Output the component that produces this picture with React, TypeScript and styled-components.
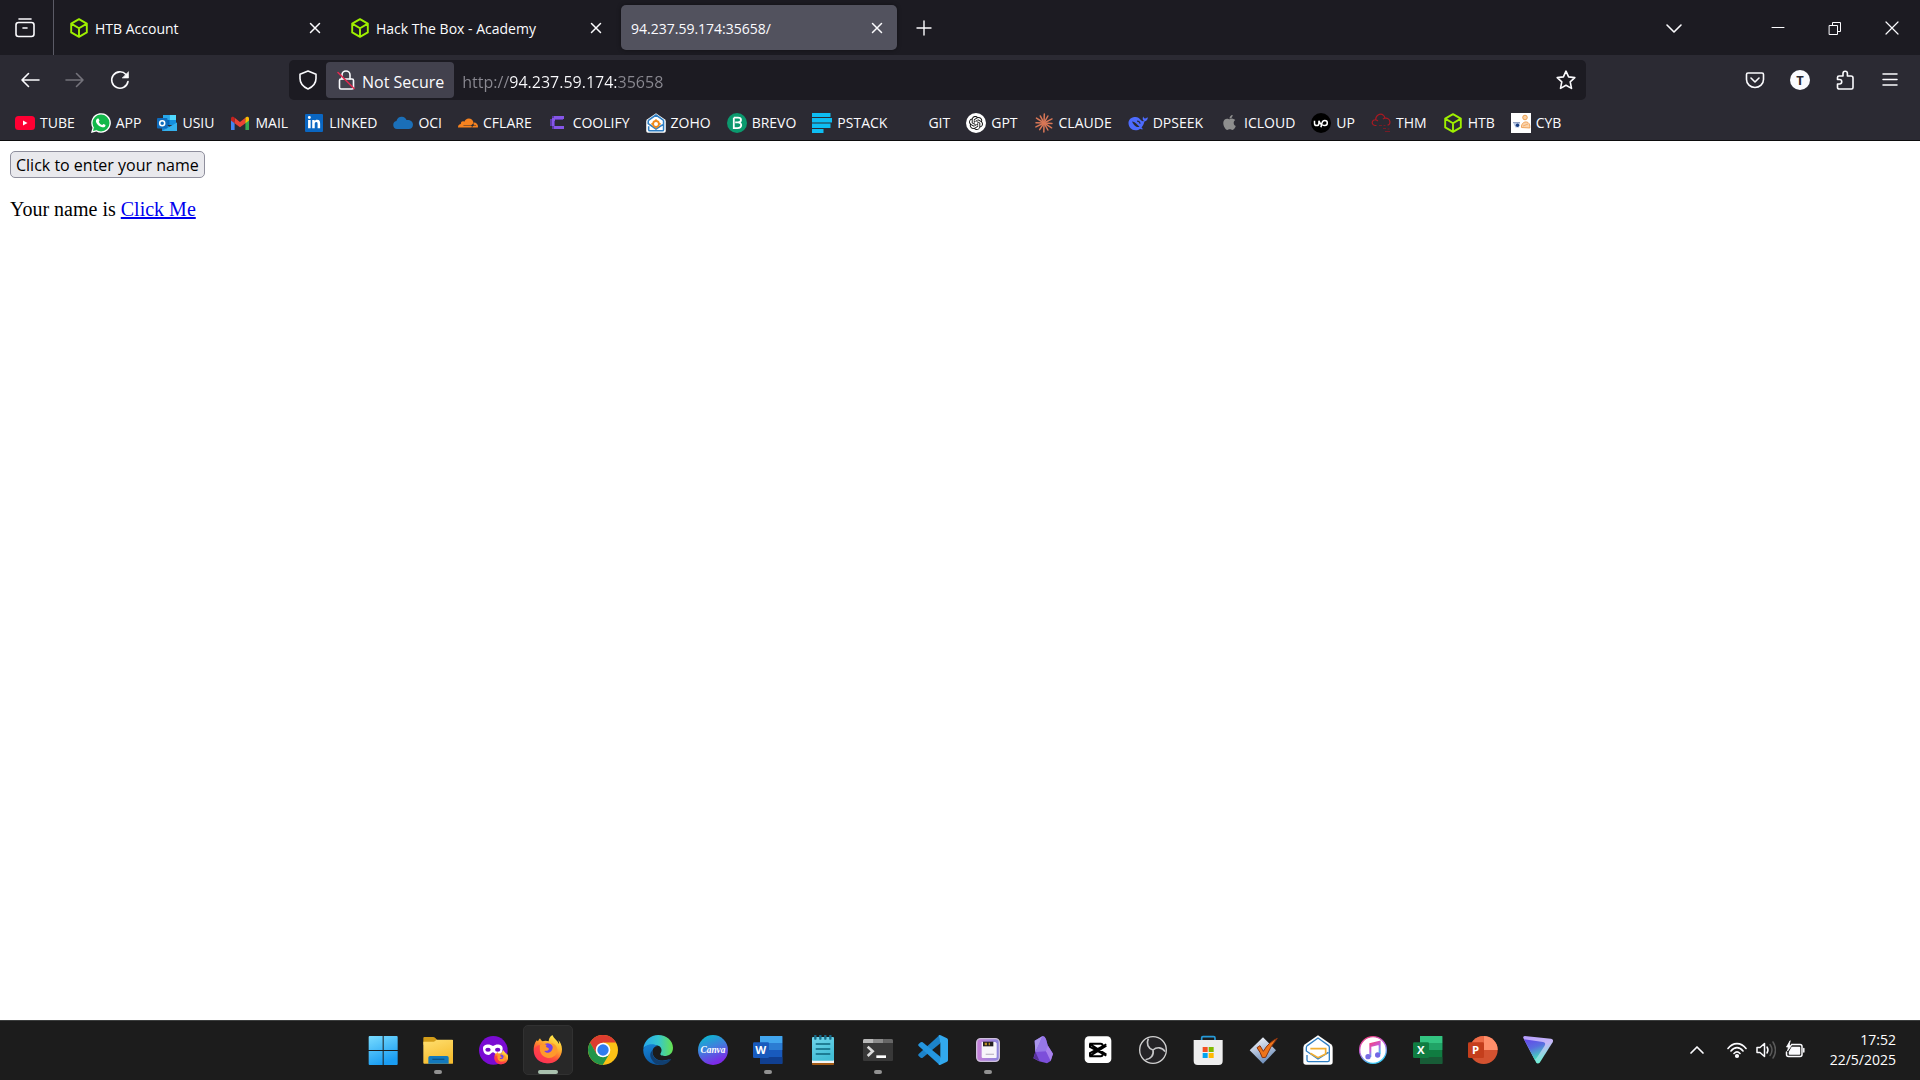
import React from "react";
import styled, { createGlobalStyle } from "styled-components";
import { SiOpenai, SiCloudflare } from "react-icons/si";
import { FaApple, FaLinkedinIn } from "react-icons/fa";

const ui = `"Open Sans", "Noto Sans", sans-serif`;

const GlobalStyle = createGlobalStyle`
  *, *::before, *::after { box-sizing: border-box; }
  body { margin: 0; background: #ffffff; font-family: ${ui}; }
  button, input { font: inherit; }
`;

const Window = styled.div`
  display: flex;
  flex-direction: column;
  min-height: 100vh;
`;

const TabStrip = styled.header`
  display: flex;
  align-items: center;
  height: 55px;
  background: #1c1b22;
  color: #fbfbfe;
  font-size: 14px;
`;

const IconButton = styled.button<{ $w?: number; $h?: number; $dim?: boolean }>`
  display: flex;
  flex: none;
  align-items: center;
  justify-content: center;
  width: ${(p) => p.$w ?? 40}px;
  height: ${(p) => p.$h ?? 40}px;
  padding: 0;
  border: 0;
  background: transparent;
  color: ${(p) => (p.$dim ? "#74737b" : "#fbfbfe")};
`;

const ViewSlot = styled.div`
  display: flex;
  align-items: center;
  justify-content: center;
  width: 54px;
  height: 55px;
  padding-right: 13px;
  padding-left: 10px;
  border-right: 1px solid #5b5b66;
`;

const Tabs = styled.div`
  display: flex;
  gap: 5px;
  min-width: 0;
  margin-left: 5px;
`;

const Tab = styled.div<{ $active?: boolean }>`
  display: flex;
  flex: 0 1 276px;
  align-items: center;
  gap: 6px;
  width: 276px;
  height: 45px;
  padding: 0 10px;
  border-radius: 5px;
  background: ${(p) => (p.$active ? "#52525e" : "transparent")};
  box-shadow: ${(p) => (p.$active ? "0 0 4px rgba(0, 0, 0, 0.4)" : "none")};
`;

const TabTitle = styled.span`
  flex: 1;
  overflow: hidden;
  padding-top: 2px;
  line-height: 20px;
  white-space: nowrap;
`;

const Spacer = styled.div`
  flex: 1;
`;

const WindowControls = styled.div`
  display: flex;
  margin-left: 55px;
`;

const NavBar = styled.nav`
  display: flex;
  align-items: center;
  height: 50px;
  padding: 0 10px;
  background: #2b2a33;
`;

const NavGroup = styled.div`
  display: flex;
  gap: 5px;
`;

const FlexSpace = styled.div`
  flex: 0 1 149px;
`;

const UrlBar = styled.div`
  display: flex;
  flex: 1;
  align-items: center;
  height: 40px;
  border-radius: 5px;
  background: #1c1b22;
  color: #fbfbfe;
  font-size: 16px;
`;

const Identity = styled.button`
  display: flex;
  align-items: center;
  gap: 6px;
  height: 36px;
  padding: 0 10px;
  border: 0;
  border-radius: 4px;
  background: #42414d;
  color: #fbfbfe;
  line-height: 20px;
  white-space: nowrap;
`;

const IdentityLabel = styled.span`
  padding-top: 3px;
`;

const UrlInput = styled.input`
  flex: 1;
  min-width: 0;
  height: 36px;
  margin-left: 8px;
  padding: 3px 0 0;
  border: 0;
  outline: 0;
  background-image: linear-gradient(90deg, #8a8991 48px, #fbfbfe 48px 155px, #8a8991 155px);
  background-clip: text;
  color: #fbfbfe;
  -webkit-text-fill-color: transparent;
`;

const Bookmarks = styled.nav`
  display: flex;
  align-items: center;
  gap: 16px;
  height: 36px;
  padding: 0 15px;
  border-bottom: 1px solid #0c0c0d;
  background: #2b2a33;
`;

const Bookmark = styled.a`
  display: flex;
  align-items: center;
  gap: 5px;
  color: #fbfbfe;
  font-size: 14px;
  line-height: 20px;
  text-decoration: none;
  white-space: nowrap;
`;

const Favicon = styled.span<{ $bg?: string; $round?: boolean; $color?: string }>`
  display: flex;
  flex: none;
  align-items: center;
  justify-content: center;
  width: 20px;
  height: 20px;
  border-radius: ${(p) => (p.$round ? "10px" : "1px")};
  background: ${(p) => p.$bg ?? "transparent"};
  color: ${(p) => p.$color ?? "#ffffff"};
`;

const Page = styled.main`
  display: flex;
  flex: 1;
  flex-direction: column;
  align-items: flex-start;
  gap: 20px;
  padding: 10px;
  background: #ffffff;
`;

const NameButton = styled.button`
  height: 27px;
  padding: 0 5px;
  border: 1px solid #8f8f9d;
  border-radius: 5px;
  background: #e9e9ed;
  color: #000000;
  font-size: 16px;
  line-height: 24px;
`;

const Sentence = styled.p`
  margin: 0;
  color: #000000;
  font-family: "Liberation Serif", serif;
  font-size: 20px;
  line-height: 23px;

  a { color: #0000ee; }
`;

const Taskbar = styled.footer`
  display: grid;
  grid-template-columns: 1fr auto 1fr;
  align-items: center;
  height: 60px;
  padding-bottom: 1px;
  border-top: 1px solid #3b3d3d;
  background: #1c1c1c;
`;

const Apps = styled.div`
  display: flex;
  grid-column: 2;
  gap: 5px;
`;

const AppButton = styled.button<{ $active?: boolean }>`
  position: relative;
  display: flex;
  align-items: center;
  justify-content: center;
  width: 50px;
  height: 50px;
  padding: 0;
  border: 1px solid ${(p) => (p.$active ? "#313131" : "transparent")};
  border-radius: 5px;
  background: ${(p) => (p.$active ? "#282828" : "transparent")};
`;

const Indicator = styled.span<{ $active?: boolean }>`
  position: absolute;
  bottom: 0;
  left: 50%;
  width: ${(p) => (p.$active ? 20 : 8)}px;
  height: 4px;
  border-radius: 2px;
  background: ${(p) => (p.$active ? "#a9c1ae" : "#929292")};
  transform: translateX(-50%);
`;

const Tray = styled.div`
  display: flex;
  align-items: center;
  justify-content: flex-end;
  padding-right: 24px;
`;

const TrayGroup = styled.div`
  display: flex;
  gap: 9px;
  margin: 0 22px 0 15px;
`;

const Clock = styled.time`
  min-width: 69px;
  color: #ffffff;
  font-size: 14px;
  line-height: 20px;
  text-align: right;
`;

const stroke = {
  fill: "none",
  stroke: "currentColor",
  strokeLinecap: "round" as const,
  strokeLinejoin: "round" as const,
};

const Line = ({ d, s = 20, w = 1.6, children }: { d?: string; s?: number; w?: number; children?: React.ReactNode }) => (
  <svg width={s} height={s} viewBox="0 0 20 20" strokeWidth={w} {...stroke} aria-hidden>
    {d && <path d={d} />}
    {children}
  </svg>
);

const Cube = () => (
  <svg width="20" height="20" viewBox="0 0 20 20" fill="none" stroke="#9fef00" strokeWidth="1.9" strokeLinejoin="round" aria-hidden>
    <path d="M10 1.2 17.8 5.6V14.4L10 18.8 2.2 14.4V5.6ZM2.6 5.9 10 10.2l7.4-4.3M10 10.2v8.3" />
  </svg>
);

const closePath = "M5.5 5.5l9 9M14.5 5.5l-9 9";

/* Bookmark icons, drawn on a 20-unit grid */
const Svg20 = ({ children }: { children: React.ReactNode }) => (
  <svg width="20" height="20" viewBox="0 0 20 20" aria-hidden>{children}</svg>
);

const Youtube = () => (
  <Svg20><rect y="3" width="20" height="14" rx="3.5" fill="#ff0033" /><path d="M8 7.500l4.500 2.500L8 12.500z" fill="#fff" /></Svg20>
);

const Whatsapp = () => (
  <Svg20>
    <path d="M0 20l1.500-5.300A9.800 9.800 0 115.300 18.500z" fill="#fff" />
    <circle cx="10" cy="10" r="8.500" fill="#12b84a" /><path d="M2 18l1-4 3 3z" fill="#12b84a" />
    <path d="M7 5.400c.4 0 .6.100.8.600l.7 1.600c.1.400-.7 1-.7 1.300.8 1.500 1.800 2.500 3.300 3.100.4-.1 1-1.200 1.300-1.100l1.900.9c.3.200.2 1-.2 1.600-.7.900-2.100 1.200-3.600.7-2.700-.9-4.800-2.900-5.500-5.100-.5-1.700.7-3.600 2-3.600z" fill="#fff" />
  </Svg20>
);

const LinkedIn = () => (
  <Svg20><rect x="1" y="1" width="18" height="18" rx="1" fill="#0a66c2" /><svg x="3" y="3" width="14" height="14"><FaLinkedinIn size={14} color="#fff" /></svg></Svg20>
);

const Outlook = () => (
  <Svg20>
    <path d="M6 2h13v10H6z" fill="#1490df" /><path d="M12.5 2H19v5h-6.500z" fill="#50d9ff" /><path d="M6 2h6.500v5H6z" fill="#28a8ea" />
    <path d="M6 7h6.500v5H6z" fill="#0364b8" />
    <path d="M5 9.500l8 4.500 7-4.500v8.500H5z" fill="#1a86d9" /><path d="M20 9.500V18H5z" fill="#35b1ee" />
    <rect y="5" width="10.500" height="10.500" rx="1" fill="#0f6cbd" />
    <circle cx="5.200" cy="10.200" r="2.500" fill="none" stroke="#fff" strokeWidth="1.500" />
  </Svg20>
);

const Gmail = () => (
  <Svg20>
    <path d="M1 6v11h3.600V8.500z" fill="#4285f4" /><path d="M15.400 8.500V17H19V6z" fill="#34a853" />
    <path d="M4.600 4.800v5.400L10 14.200l5.400-4V4.800L10 8.900z" fill="#ea4335" />
    <path d="M1 5.200v2.300l3.600 2.700V4.800L3.600 4C2.500 3.200 1 3.900 1 5.200z" fill="#c5221f" />
    <path d="M19 5.200v2.300l-3.600 2.700V4.800l1-.8c1.100-.8 2.600-.1 2.600 1.200z" fill="#fbbc04" />
  </Svg20>
);

const CloudIcon = () => (
  <Svg20><path d="M4 16a4 4 0 01-.6-7.900C4.200 5 6.500 3.600 9 3.800c2.200.1 3.800 1.500 4.500 3.200 3.600-.5 6.500 1.500 6.500 4.700 0 2.800-2 4.300-4.300 4.300z" fill="#1b6fb8" /></Svg20>
);

const Coolify = () => (
  <Svg20><path d="M4 3h11v4H7v6h8v3H4v-3H2V6h2z" fill="#5b3aa8" /><path d="M6 3h10v3H7v2H4V5h2zM4 8h2v5H4zM6 13h10v3H6z" fill="#8656e8" /></Svg20>
);

const ZohoHouse = ({ big = false }: { big?: boolean }) => (
  <svg width={big ? 30 : 20} height={big ? 30 : 20} viewBox="0 0 90 90" aria-hidden>
    <path d="M45 1 84 28q5 4 5 10v43q0 8-8 8H9q-8 0-8-8V38q0-6 5-10z" fill="#fff" />
    <path d="M12 60v15q0 5 5 5h57q5 0 5-5V37q0-4-3-6L45 9 14 31q-4 3-4 7v10l35 24 31-20" fill="none" stroke="#2f7fc4" strokeWidth={big ? 4 : 7} />
    {big ? (
      <path d="M22 41h46v16L45 68 22 55" fill="none" stroke="#f3ae31" strokeWidth="5" />
    ) : (
      <><circle cx="45" cy="49" r="13" fill="#fff" stroke="#f08a1c" strokeWidth="8" /><path d="M45 28v8M45 62v8M24 49h8M58 49h8" stroke="#f08a1c" strokeWidth="7" /></>
    )}
  </svg>
);

const Brevo = () => (
  <Svg20><circle cx="10" cy="10" r="10" fill="#0b996e" /><path d="M6.800 4.700h4.200c4 0 4 4.400 0 4.700H8.200M6.800 4.700v10.400h3.600c5 0 5-5.600.6-5.700" fill="none" stroke="#fff" strokeWidth="1.800" /></Svg20>
);

const Paystack = () => (
  <Svg20><path d="M0 0h18.500v4H0zM0 5h20v4.500H0zM0 10.500h18.500V15H0zM0 16h11.500v4H0z" fill="#0ebdf2" /></Svg20>
);

const Claude = () => (
  <Svg20>
    <g stroke="#d97757" strokeWidth="1.500" strokeLinecap="round">
      {[2, 29, 63, 94, 122, 151, 181, 213, 244, 272, 303, 332].map((a, i) => (
        <path key={a} d={`M10 10V${i % 2 ? 2 : 1}`} transform={`rotate(${a} 10 10)`} />
      ))}
    </g>
  </Svg20>
);

const Deepseek = () => (
  <Svg20>
    <path d="M19.900 4.600c-1-.2-1.700.7-2.700.9-1.200.2-1.600-1.400-2-2-.8 1.800-.7 3.200.6 4.300-.6.8-1.600.6-2.500-.3C11.500 5.500 10 3.700 6.600 4 2.700 4.400.4 7 .5 10.300c.2 4 3 6.900 6.900 6.900 2 0 3.500-.5 4.700-1.500 1.200.9 2.600.7 3.300.2-1-.3-1.500-.8-1.800-1.500 1.500-1.600 2.200-3.200 2.800-5.800 2-.3 3.300-1.700 3.500-4z" fill="#4d6bfe" />
    <path d="M4 8.600c2.600-.2 5 2.800 7.500 5.200-1.600.7-2.600.1-3.500-.4-2-1.200-3-2.400-4-4.800z" fill="#2b2a33" /><path d="M9 8.200c1.600-.3 2.900.9 3 2.500" fill="none" stroke="#2b2a33" strokeWidth="1.100" />
  </Svg20>
);

const Upwork = () => (
  <Svg20>
    <circle cx="10" cy="10" r="10" fill="#000" />
    <path d="M3.500 7.800v2.600a2.200 2.200 0 004.400 0V7.800c.7 2 1.800 3.700 3.400 4.500M9.900 14.200l1.100-4.300c.4-1.500 1.300-2.400 2.800-2.400a2.500 2.500 0 010 5c-1 0-1.800-.2-2.500-.8" fill="none" stroke="#fff" strokeWidth="1.500" />
  </Svg20>
);

const TryHackMe = () => (
  <Svg20>
    <path d="M5.500 12.500H4C1 12.200.4 8.800 2.500 7.300c.7-.5 1.600-.6 2.200-.5C4.600 2 9.500-.5 12.500 2.400c1 .9 1.300 1.900 1.400 2.800 2.600-.5 4.700 1.200 5 3.400.2 2-1 3.300-2.300 3.600M4.700 6.800c1 .1 1.600.5 2.200 1.200M13.900 5.200c-1 .1-1.700.6-2 1" fill="none" stroke="#a91922" strokeWidth="1.200" />
    <path d="M8 12.500h3M12.500 12.500h2M12 15.500h3M14 18.500h5M16.500 16h2" stroke="#761b25" strokeWidth="1" />
  </Svg20>
);

const Cyb = () => (
  <Svg20>
    <rect width="20" height="20" fill="#fff" />
    <circle cx="14" cy="4.500" r="2.300" fill="#fbd0a2" stroke="#e89643" strokeWidth=".9" /><path d="M10.500 14.500c-.5-7 8.500-7.500 8.300-1v1.500z" fill="#fbd3aa" stroke="#ed9d50" strokeWidth=".9" />
    <path d="M2 9.500h7l-1 5H4.500z" fill="#b4c4e2" /><path d="M2 9.500h7" stroke="#8292b8" strokeWidth=".8" /><circle cx="6.500" cy="12.300" r="1.700" fill="#183c80" /><path d="M12 13l5-2" stroke="#f0a55e" strokeWidth=".8" />
  </Svg20>
);

const bookmarks: { label: string; icon: React.ReactNode }[] = [
  { label: "TUBE", icon: <Favicon><Youtube /></Favicon> },
  { label: "APP", icon: <Favicon><Whatsapp /></Favicon> },
  { label: "USIU", icon: <Favicon><Outlook /></Favicon> },
  { label: "MAIL", icon: <Favicon><Gmail /></Favicon> },
  { label: "LINKED", icon: <Favicon><LinkedIn /></Favicon> },
  { label: "OCI", icon: <Favicon><CloudIcon /></Favicon> },
  { label: "CFLARE", icon: <Favicon $color="#f6821f"><SiCloudflare size={20} /></Favicon> },
  { label: "COOLIFY", icon: <Favicon><Coolify /></Favicon> },
  { label: "ZOHO", icon: <Favicon><ZohoHouse /></Favicon> },
  { label: "BREVO", icon: <Favicon><Brevo /></Favicon> },
  { label: "PSTACK", icon: <Favicon><Paystack /></Favicon> },
  { label: "GIT", icon: <Favicon /> },
  { label: "GPT", icon: <Favicon $bg="#ffffff" $round $color="#111111"><SiOpenai size={14} /></Favicon> },
  { label: "CLAUDE", icon: <Favicon><Claude /></Favicon> },
  { label: "DPSEEK", icon: <Favicon><Deepseek /></Favicon> },
  { label: "ICLOUD", icon: <Favicon $color="#8e8e8e"><FaApple size={17} /></Favicon> },
  { label: "UP", icon: <Favicon><Upwork /></Favicon> },
  { label: "THM", icon: <Favicon><TryHackMe /></Favicon> },
  { label: "HTB", icon: <Favicon><Cube /></Favicon> },
  { label: "CYB", icon: <Favicon><Cyb /></Favicon> },
];

/* Taskbar icons share a 90-unit grid shown at 30px */
const Svg90 = ({ children }: { children: React.ReactNode }) => (
  <svg width="30" height="30" viewBox="0 0 90 90" aria-hidden>{children}</svg>
);

const Gradient = ({ id, from, to, mid, h }: { id: string; from: string; to: string; mid?: string; h?: boolean }) => (
  <linearGradient id={id} x1="0" y1="0" x2={h ? "1" : "0.4"} y2={h ? "0" : "1"}>
    <stop stopColor={from} />{mid && <stop offset=".5" stopColor={mid} />}<stop offset="1" stopColor={to} />
  </linearGradient>
);

const Fox = ({ id }: { id: string }) => (
  <>
    <defs>
      <linearGradient id={id} x1="0.8" y1="0" x2="0.25" y2="1"><stop stopColor="#fff44f" /><stop offset=".35" stopColor="#ffb52e" /><stop offset=".65" stopColor="#ff5b36" /><stop offset="1" stopColor="#f5156c" /></linearGradient>
    </defs>
    <path d="M58 0c-9 6-11 14-11 19-7-3-14-2-18 0-4-2-7-6-8-9-3 3-5 6-6 9l-4-3C4 25 2 35 2 45c0 24 18 40 42 40 25 0 43-18 43-42 0-12-5-22-11-27 2 5 3 9 2 11C73 16 63 12 58 0z" fill={`url(#${id})`} />
    <circle cx="44" cy="43" r="18" fill="#7542e5" />
    <path d="M21 30c7-5 15-3 21 1-4 1-4 4-1 6 5 2 8 3 6 7-3 5-9 2-13 4 4 7 16 7 21 0 7-8 5-19-3-24 13 1 23 11 21 25-3 15-17 22-31 19C24 65 18 47 21 30z" fill="#ff9a2b" />
    <path d="M4 43c-3 20 13 41 37 42 17 1 31-7 37-16-12 9-30 10-43 0C22 61 17 49 21 31c-8-1-13 5-17 12z" fill="#ff3d4b" opacity=".75" />
  </>
);

const Office = ({ letter, dark, mid, light, pale, box }: Record<string, string>) => (
  <Svg90>
    <rect x="21" y="3" width="67" height="84" rx="3" fill={mid} />
    <rect x="21" y="3" width="67" height="21" fill={pale} /><rect x="21" y="24" width="67" height="21" fill={light} /><rect x="21" y="66" width="67" height="21" fill={dark} />
    <rect y="22" width="48" height="47" rx="4" fill={box} />
    <text x="23" y="57" textAnchor="middle" fontFamily="Open Sans" fontWeight="700" fontSize="34" fill="#fff">{letter}</text>
  </Svg90>
);

const apps: { name: string; icon: React.ReactNode; open?: boolean; active?: boolean }[] = [
  { name: "Start", icon: <Svg90><defs><Gradient id="win" from="#79dcff" to="#1a9df2" /></defs><path d="M5 3h39v42H2V6q0-3 3-3zM47 3h39q3 0 3 3v39H47zM2 48h42v42H5q-3 0-3-3zM47 48h42v39q0 3-3 3H47z" fill="url(#win)" /></Svg90> },
  { name: "File Explorer", open: true, icon: <Svg90><defs><Gradient id="fld" from="#ffdf70" to="#f6bd30" /></defs><path d="M4 6h26q4 0 7 3l8 8v12H1V9q0-3 3-3z" fill="#d39d19" /><path d="M1 20h32l8-6h46q4 0 4 4v66q0 2-3 2H4q-3 0-3-3z" fill="url(#fld)" /><path d="M16 86V68q0-5 5-5h51q5 0 5 5v18z" fill="#1379bd" /><path d="M28 73h36" stroke="#0c5487" strokeWidth="4" /></Svg90> },
  { name: "Private browsing", icon: <Svg90><circle cx="46" cy="46" r="43" fill="#7a0bd3" /><path d="M45 33c9-7 29-7 29 7 0 13-6 20-16 20-6 0-8-8-13-8s-7 8-13 8c-10 0-17-7-17-20 0-14 21-14 30-7z" fill="#fff" /><ellipse cx="30" cy="44" rx="8" ry="6" fill="#7209c8" /><ellipse cx="59" cy="44" rx="8" ry="6" fill="#7209c8" /><g transform="translate(48 46) scale(.49)"><Fox id="foxmini" /></g></Svg90> },
  { name: "Firefox", open: true, active: true, icon: <Svg90><Fox id="foxbig" /></Svg90> },
  { name: "Chrome", icon: <Svg90><circle cx="45" cy="45" r="45" fill="#fbc116" /><path d="M6 22.500A45 45 0 0184 22.500H45L25 56z" fill="#dd3c2f" /><path d="M6 22.500 26 57 45 67 44 90A45 45 0 016 22.500z" fill="#229549" /><path d="M44 90 64 57l-19 10-19-10z" fill="#229549" /><circle cx="45" cy="45" r="22" fill="#fff" /><circle cx="45" cy="45" r="17" fill="#2f7cee" /></Svg90> },
  { name: "Edge", icon: <Svg90><defs><Gradient id="eg1" h from="#27a8ea" mid="#35c6d1" to="#67e34d" /><Gradient id="eg2" from="#1685d7" to="#0c59a4" /></defs><path d="M1 40C4 17 22 0 46 0c25 0 44 18 44 38 0 17-12 25-26 25-9 0-14-4-11-8 6-9 2-22-12-24C22 28 6 33 1 40z" fill="url(#eg1)" /><path d="M1 41c5-13 31-18 43-8-14 1-18 15-14 26 6 17 26 21 50 14-8 11-20 17-34 17C20 90-2 69 1 41z" fill="url(#eg2)" /><path d="M30 45c-8 24 19 42 50 28 3-2 5 0 3 2-12 18-36 19-49 8-15-13-16-30-4-38z" fill="#113f70" /></Svg90> },
  { name: "Canva", icon: <Svg90><defs><Gradient id="cnv" from="#00c4cc" mid="#3d82dc" to="#7d2ae8" /></defs><circle cx="45" cy="45" r="45" fill="url(#cnv)" /><text x="45" y="53" textAnchor="middle" fontFamily="Liberation Serif" fontStyle="italic" fontWeight="700" fontSize="28" fill="#fff">Canva</text></Svg90> },
  { name: "Word", open: true, icon: <Office letter="W" dark="#103f91" mid="#185abd" light="#2b7cd3" pale="#41a5ee" box="#185abd" /> },
  { name: "Notepad", icon: <Svg90><defs><Gradient id="ntp" from="#70d5eb" to="#43bed6" /></defs><rect x="12" y="78" width="66" height="12" rx="2" fill="#a35a14" /><rect x="12" y="70" width="66" height="14" fill="#f4f4f4" /><rect x="12" y="6" width="66" height="71" rx="3" fill="url(#ntp)" /><path d="M22 2v9M37 2v9M52 2v9M67 2v9" stroke="#176b88" strokeWidth="7" strokeLinecap="round" /><path d="M25 27h40M25 42h40M25 57h40" stroke="#0e657e" strokeWidth="5" strokeLinecap="round" /></Svg90> },
  { name: "Terminal", open: true, icon: <Svg90><rect y="12" width="90" height="66" rx="5" fill="#484848" /><path d="M0 24h90v49q0 5-5 5H5q-5 0-5-5z" fill="#383838" /><path d="M4 12h28v12H0v-7q0-5 4-5z" fill="#b9b9b9" /><path d="M32 12h29v12H32z" fill="#8b8b8b" /><path d="M61 12h24q5 0 5 5v7H61z" fill="#666" /><path d="M14 35l15 14-15 14" fill="none" stroke="#dadada" strokeWidth="8" /><path d="M40 65h29" stroke="#fff" strokeWidth="8" /></Svg90> },
  { name: "Visual Studio Code", icon: <Svg90><path d="M64 1 2 57q-3 3 0 6l6 5q3 2 6 0L67 25z" fill="#1c83ca" /><path d="M64 89 2 33q-3-3 0-6l6-5q3-2 6 0l53 43z" fill="#2496e0" /><path d="M62 1q3-2 6 0l19 9q3 2 3 5v60q0 3-3 5l-19 9q-3 2-6 0l5-24V25z" fill="#32a9ee" /></Svg90> },
  { name: "Backup tool", open: true, icon: <Svg90><defs><Gradient id="bak" h from="#c77fd8" to="#8a86dc" /></defs><rect x="11" y="11" width="68" height="68" rx="12" fill="url(#bak)" stroke="#cfc0dd" strokeWidth="4" /><path d="M26 21h41l4 4v41q0 3-3 3H29q-3 0-3-3z" fill="#f7f4fa" /><path d="M30 20h31v14H30z" fill="#241f22" /><path d="M35 23h7v8h-7zM47 23h4v8h-4z" fill="#b58a24" /><path d="M38 58h25" stroke="#c4bccb" strokeWidth="4" /></Svg90> },
  { name: "Obsidian", icon: <Svg90><path d="M20 17 44 3q6 0 10 10l5 18 16 25-7 22-11 7-24-6-17-9 6-20z" fill="#7c4fda" /><path d="M44 3 35 25 22 51 20 17z" fill="#a995eb" /><path d="M44 3q8 1 10 10l5 18-3 18-34 2z" fill="#9677e7" /><path d="M22 50l13 29-18-9z" fill="#563198" /><path d="M59 31l16 25-7 22-14-29z" fill="#a982ed" /></Svg90> },
  { name: "CapCut", icon: <Svg90><rect x="5" y="4" width="80" height="80" rx="13" fill="#fff" /><path d="M73 31 31 57q-6 4-6 6h31q6 0 6-7M73 58 31 31q-6-4-6-6h31q6 0 6 7M24 25v10l49 26M24 63V53l49-26" transform="translate(-3 1)" fill="none" stroke="#000" strokeWidth="6" /></Svg90> },
  { name: "OBS Studio", icon: <Svg90><circle cx="45" cy="45" r="40" fill="#242326" stroke="#d0d0d0" strokeWidth="4" />{[0, 120, 240].map((a) => <path key={a} d="M45 45C30 40 24 26 31 11" transform={`rotate(${a} 45 45)`} fill="none" stroke="#c6c6c8" strokeWidth="5" />)}</Svg90> },
  { name: "Microsoft Store", icon: <Svg90><path d="M26 20V9q0-4 4-4h32q4 0 4 4v11" fill="none" stroke="#269bd9" strokeWidth="5" /><path d="M2 15h87v63q0 12-12 12H14Q2 90 2 78z" fill="#eee" /><path d="M29 36h15v15H29z" fill="#f25022" /><path d="M47 36h15v15H47z" fill="#7fba00" /><path d="M29 54h15v15H29z" fill="#00a4ef" /><path d="M47 54h15v15H47z" fill="#ffb900" /></Svg90> },
  { name: "Task checker", icon: <Svg90><defs><Gradient id="dia" from="#fff" mid="#b9c8df" to="#7392bd" /></defs><path d="M45 7 84 46 45 86 5 46z" fill="url(#dia)" /><path d="M27 38l9-6 10 17q16-28 42-39Q67 34 53 67l-10 1q-6-17-16-30z" fill="#ed741b" stroke="#8a3510" strokeWidth="3" /></Svg90> },
  { name: "Zoho Mail", icon: <ZohoHouse big /> },
  { name: "iTunes", icon: <Svg90><defs><Gradient id="itr" from="#fb3f70" mid="#c35bdc" to="#3cc8f5" /></defs><circle cx="45" cy="45" r="40" fill="#fff" stroke="url(#itr)" strokeWidth="4" /><path d="M37 66V27l28-7v38M37 33l28-7" fill="none" stroke="url(#itr)" strokeWidth="6" /><circle cx="30" cy="65" r="8" fill="#786ce5" /><circle cx="59" cy="60" r="8" fill="#7166e5" /></Svg90> },
  { name: "Excel", icon: <Office letter="X" dark="#185c37" mid="#107c41" light="#21a366" pale="#33c481" box="#107c41" /> },
  { name: "PowerPoint", icon: <Svg90><circle cx="47" cy="45" r="42" fill="#d35230" /><path d="M47 3a42 42 0 0142 42H47z" fill="#ff8f6b" /><path d="M47 3v42H5A42 42 0 0147 3z" fill="#ed6c47" /><rect y="22" width="48" height="47" rx="4" fill="#c43e1c" /><text x="23" y="57" textAnchor="middle" fontFamily="Open Sans" fontWeight="700" fontSize="34" fill="#fff">P</text></Svg90> },
  { name: "Proton VPN", icon: <Svg90><defs><Gradient id="pv1" from="#b69cff" mid="#c6b8f7" to="#71edd5" /><Gradient id="pv2" from="#6545e9" mid="#596de0" to="#46d6bd" /></defs><path d="M5 3 84 11q9 2 5 11L51 82q-7 7-12 0L1 9q-2-5 4-6z" fill="url(#pv1)" /><path d="M3 13l57 8q10 2 5 11L43 66q-4 7-8 8z" fill="url(#pv2)" /></Svg90> },
];

const TabItem = ({ title, active, icon }: { title: string; active?: boolean; icon?: boolean }) => (
  <Tab $active={active} role="tab" aria-selected={!!active}>
    {icon && <Cube />}
    <TabTitle>{title}</TabTitle>
    <IconButton $w={20} $h={20} aria-label={`Close ${title}`}><Line d={closePath} w={1.5} /></IconButton>
  </Tab>
);

export default function App() {
  return (
    <Window>
      <GlobalStyle />
      <TabStrip>
        <ViewSlot>
          <IconButton $w={30} aria-label="Firefox View">
            <Line w={1.6}><path d="M4 1h12" /><rect x="1" y="4.500" width="18" height="14" rx="2.500" /><path d="M8 10h4" /></Line>
          </IconButton>
        </ViewSlot>
        <Tabs role="tablist">
          <TabItem title="HTB Account" icon />
          <TabItem title="Hack The Box - Academy" icon />
          <TabItem title="94.237.59.174:35658/" active />
        </Tabs>
        <IconButton $w={54} aria-label="New tab"><Line d="M10 3v14M3 10h14" w={1.4} /></IconButton>
        <Spacer />
        <IconButton aria-label="List all tabs"><Line d="M3 7l7 7 7-7" w={1.6} /></IconButton>
        <WindowControls>
          <IconButton $w={57} $h={55} aria-label="Minimize"><Line d="M4 9.500h12" w={1} /></IconButton>
          <IconButton $w={57} $h={55} aria-label="Restore"><Line w={1}><path d="M4.500 7.500h8v9h-8zM7.500 7.500v-3h8v9h-3" /></Line></IconButton>
          <IconButton $w={57} $h={55} aria-label="Close window"><Line d="M4 4l12 12M16 4L4 16" w={1.200} /></IconButton>
        </WindowControls>
      </TabStrip>

      <NavBar>
        <NavGroup>
          <IconButton aria-label="Back"><Line d="M2 10h17M8.500 3.500L2 10l6.500 6.500" w={1.600} /></IconButton>
          <IconButton $dim aria-label="Forward"><Line d="M1 10h17M11.500 3.500L18 10l-6.500 6.500" w={1.600} /></IconButton>
          <IconButton aria-label="Reload"><Line w={1.600}><path d="M18 11.500A8.200 8.200 0 1116 4.500" /><path d="M18.500 2v6h-6z" fill="currentColor" strokeWidth=".6" /></Line></IconButton>
        </NavGroup>
        <FlexSpace />
        <UrlBar>
          <IconButton $w={37} aria-label="Tracking protection"><Line d="M10 1l8 3.200v4.300c0 4.800-3.200 8.300-8 10.500-4.800-2.200-8-5.700-8-10.500V4.200z" w={1.600} /></IconButton>
          <Identity>
            <Line w={1.600}><path d="M6 9V5a4 4 0 018 0V9" /><path d="M5 9h11q1.500 0 1.500 1.500v7q0 1.500-1.500 1.500H5q-1.500 0-1.500-1.500v-7Q3.500 9 5 9z" /><path d="M2 2.500l16 16" stroke="#e22850" /></Line>
            <IdentityLabel>Not Secure</IdentityLabel>
          </Identity>
          <UrlInput aria-label="Address" defaultValue="http://94.237.59.174:35658" />
          <IconButton aria-label="Bookmark this page"><Line d="M10 1.200l2.600 5.700 6.200.7-4.600 4.200 1.300 6.600L10 15.200l-5.500 3.200 1.300-6.600L1.200 7.600l6.200-.7z" w={1.600} /></IconButton>
        </UrlBar>
        <FlexSpace />
        <NavGroup>
          <IconButton aria-label="Save to Pocket"><Line w={1.600}><path d="M3 3h14q1.500 0 1.500 1.500V9.500a8.500 8 0 01-17 0V4.500Q1.500 3 3 3z" /><path d="M6 8l4 4 4-4" /></Line></IconButton>
          <IconButton aria-label="Account"><svg width="20" height="20" viewBox="0 0 20 20" aria-hidden><circle cx="10" cy="10" r="10" fill="#fbfbfe" /><text x="10" y="14.500" textAnchor="middle" fontFamily="Open Sans" fontWeight="700" fontSize="13" fill="#2b2a33">T</text></svg></IconButton>
          <IconButton aria-label="Extensions"><Line d="M4 6H8V3.500a2.200 2.200 0 014.400 0V6H16q2 0 2 2v9.500q0 1.500-1.500 1.500H4.500q-2 0-2-1.500V14h2a2 2 0 000-4.500h-2V7.500Q2.500 6 4 6z" w={1.600} /></IconButton>
          <IconButton aria-label="Open menu"><Line d="M3 4h14M3 9.500h14M3 15h14" w={1.500} /></IconButton>
        </NavGroup>
      </NavBar>

      <Bookmarks aria-label="Bookmarks">
        {bookmarks.map((b) => (
          <Bookmark key={b.label} href="#">{b.icon}{b.label}</Bookmark>
        ))}
      </Bookmarks>

      <Page>
        <NameButton>Click to enter your name</NameButton>
        <Sentence>Your name is <a href="#">Click Me</a></Sentence>
      </Page>

      <Taskbar>
        <Apps>
          {apps.map((a) => (
            <AppButton key={a.name} $active={a.active} aria-label={a.name}>
              {a.icon}
              {a.open && <Indicator $active={a.active} />}
            </AppButton>
          ))}
        </Apps>
        <Tray>
          <IconButton $w={30} aria-label="Show hidden icons"><Line d="M4 13l6-6 6 6" w={1.700} /></IconButton>
          <TrayGroup>
            <IconButton $w={20} aria-label="Network"><Line w={1.600}><path d="M1 8.500C6 2 14 2 19 8.500M4 11c3.500-4.500 8.500-4.500 12 0M7 13.500c2-2.200 4-2.200 6 0" /><circle cx="10" cy="16" r="1.300" fill="currentColor" /></Line></IconButton>
            <IconButton $w={20} aria-label="Volume"><Line w={1.500}><path d="M1 7.500h3L8.500 3.500v13L4 12.500H1zM11 7q2 3 0 6" /><path d="M14 4.500q4 5.500 0 11M17 2q5 8 0 16" stroke="#5a5a5a" /></Line></IconButton>
            <IconButton $w={20} aria-label="Battery"><Line w={1.500}><path d="M6.500 4.500H15q2 0 2 2v8q0 2-2 2H3.500q-2 0-2-2V12M18.800 8.500v3.500" /><path d="M7 7.500h7.500v6.500H4.500V12z" fill="currentColor" /><path d="M5 1L1.500 7h2L2.500 11 6.500 5.500h-2z" fill="currentColor" strokeWidth=".8" /></Line></IconButton>
          </TrayGroup>
          <Clock dateTime="2025-05-22T17:52">17:52<br />22/5/2025</Clock>
        </Tray>
      </Taskbar>
    </Window>
  );
}
